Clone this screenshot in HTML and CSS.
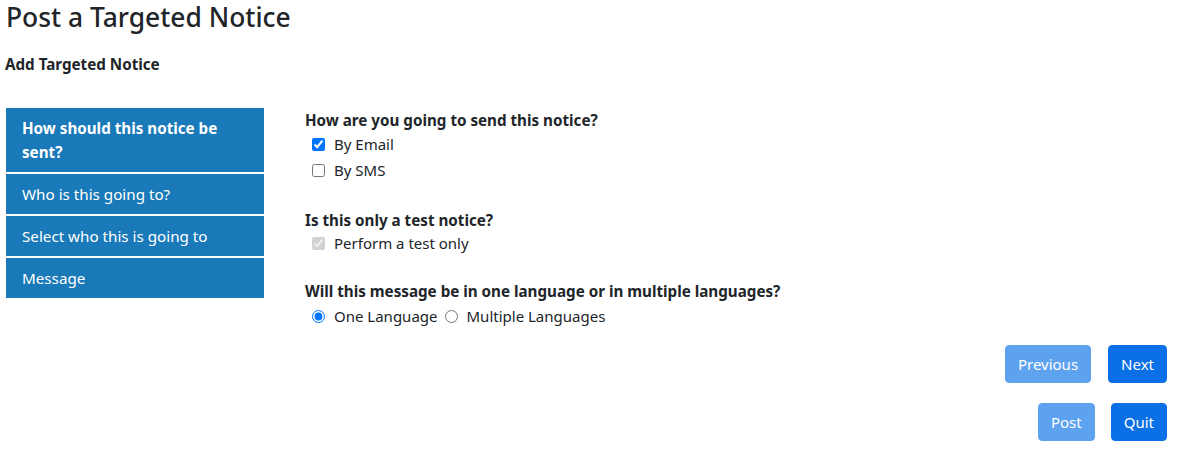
FILE: index.html
```html
<!DOCTYPE html>
<html lang="en">
<head>
<meta charset="utf-8">
<title>Post a Targeted Notice</title>
<link rel="stylesheet" href="styles.css">
</head>
<body>
<div class="page">
  <h3 class="title">Post a Targeted Notice</h3>
  <h5 class="subtitle">Add Targeted Notice</h5>
  <div class="layout">
    <nav class="steps">
      <div class="step active">How should this notice be sent?</div>
      <div class="step">Who is this going to?</div>
      <div class="step">Select who this is going to</div>
      <div class="step">Message</div>
    </nav>
    <div class="content">
      <div class="group g1">
        <div class="q">How are you going to send this notice?</div>
        <label class="opt"><input type="checkbox" checked> By Email</label>
        <label class="opt"><input type="checkbox"> By SMS</label>
      </div>
      <div class="group g2">
        <div class="q">Is this only a test notice?</div>
        <label class="opt"><input type="checkbox" checked disabled> Perform a test only</label>
      </div>
      <div class="group g3">
        <div class="q">Will this message be in one language or in multiple languages?</div>
        <div class="radios">
          <label class="opt inline"><input type="radio" name="lang" checked> One Language</label>
          <label class="opt inline"><input type="radio" name="lang"> Multiple Languages</label>
        </div>
      </div>
    </div>
  </div>
  <div class="actions">
    <button class="btn" disabled>Previous</button>
    <button class="btn">Next</button>
  </div>
  <div class="actions second">
    <button class="btn" disabled>Post</button>
    <button class="btn">Quit</button>
  </div>
</div>
</body>
</html>
```

FILE: styles.css
```css
* { box-sizing: border-box; }
body {
  margin: 0;
  font-family: "Noto Sans", sans-serif;
  font-size: 16px;
  line-height: 1.5;
  color: #212529;
  background: #fff;
}
.page {
  padding: 0 14px 0 6px;
}
.title {
  margin: 0;
  font-size: 26.4px;
  font-weight: 500;
  line-height: 34px;
}
.subtitle {
  margin: 18px 0 0 -1px;
  font-size: 15.2px;
  font-weight: 700;
  line-height: 24px;
}
.layout {
  display: flex;
  gap: 41px;
  margin-top: 32px;
}
.steps {
  width: 258px;
  display: flex;
  flex-direction: column;
  gap: 2px;
  flex-shrink: 0;
}
.step {
  background: #1a79b8;
  color: #fff;
  padding: 8px 16px;
  font-size: 15.2px;
  line-height: 24px;
}
.step.active {
  font-weight: 700;
}
.content {
  display: flex;
  flex-direction: column;
}
.g2 {
  margin-top: 26px;
}
.g3 {
  margin-top: 24px;
}
.q {
  font-weight: 700;
  font-size: 15.2px;
  line-height: 24px;
}
.opt {
  display: flex;
  align-items: center;
  height: 24px;
  padding-left: 4px;
  font-size: 15px;
}
.opt + .opt {
  margin-top: 2px;
}
.g2 .opt {
  margin-top: -1px;
}
.opt input {
  margin: 0 9px 0 3px;
  width: 13px;
  height: 13px;
}
.radios {
  display: flex;
  margin-top: 1px;
}
.radios .opt + .opt {
  margin-top: 0;
}
.opt.inline input {
  margin-right: 9px;
}
.actions {
  display: flex;
  justify-content: flex-end;
  gap: 17px;
  margin-top: 17px;
}
.actions.second {
  margin-top: 20px;
  gap: 16px;
}
.btn {
  font-family: inherit;
  font-size: 15px;
  line-height: 24px;
  padding: 6px 12px;
  border: 1px solid #0b6fe6;
  border-radius: 4px;
  background: #0b6fe6;
  color: #fff;
}
.btn:disabled {
  background: #5da2ef;
  border-color: #5da2ef;
}
```
